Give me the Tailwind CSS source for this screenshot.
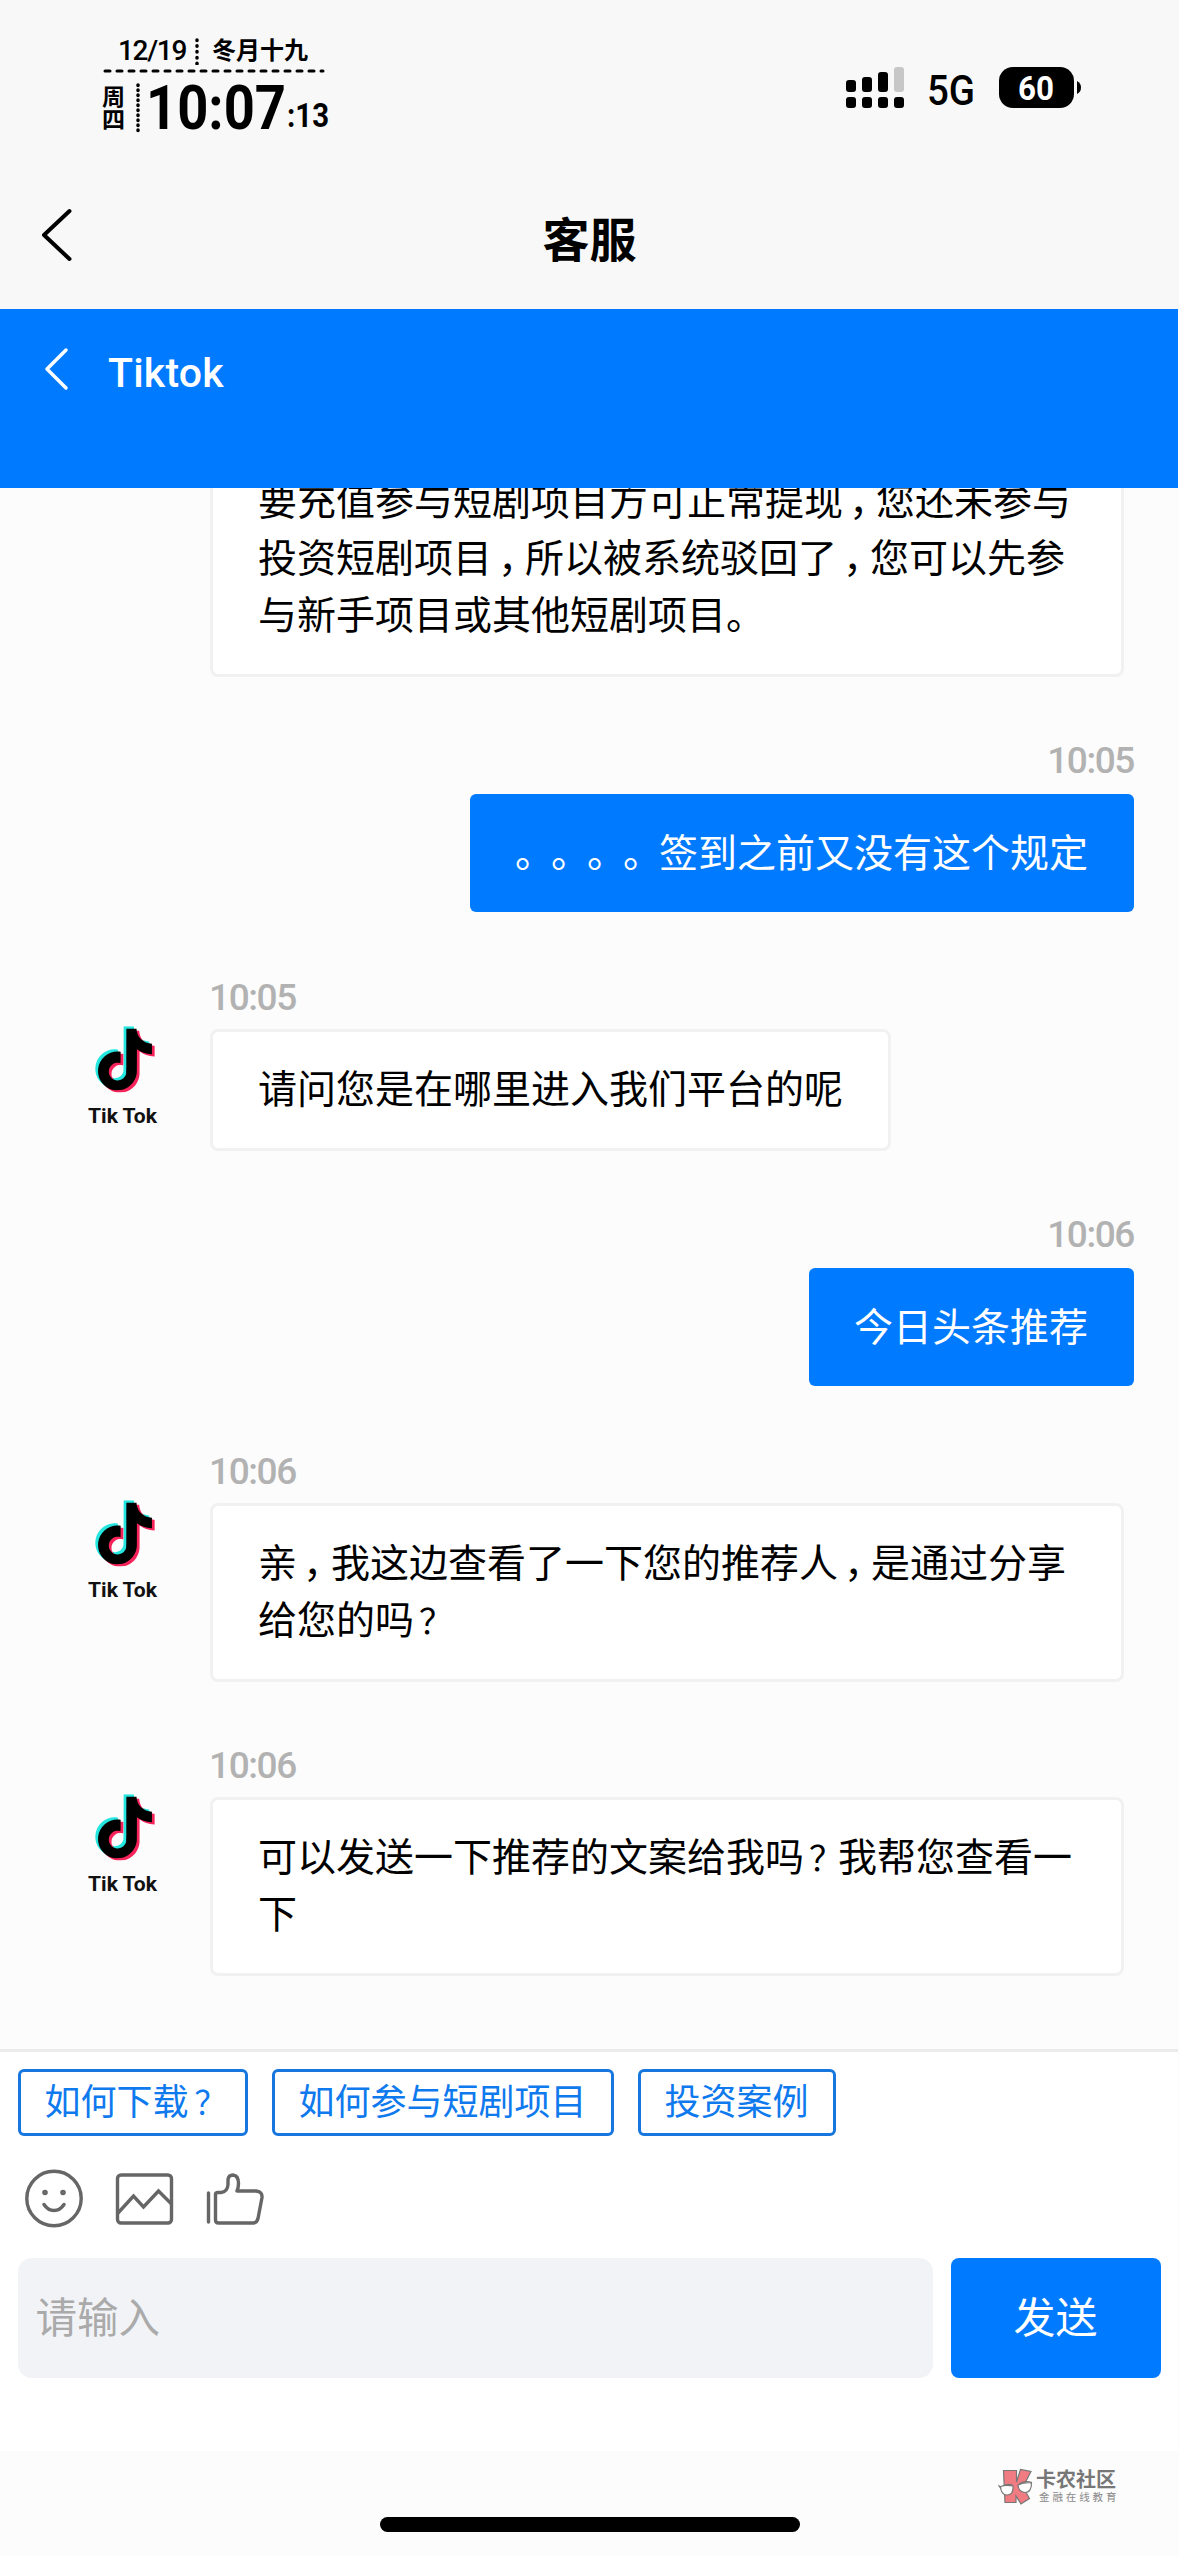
<!DOCTYPE html>
<html lang="zh-CN">
<head>
<meta charset="utf-8">
<title>客服</title>
<script src="https://cdn.jsdelivr.net/npm/@tailwindcss/browser@4"></script>
</head>
<body class="w-[1179px] h-[2556px] overflow-hidden flex flex-col bg-[#fcfcfc] text-black font-[Roboto,'Noto_Sans_CJK_SC',sans-serif]">
<svg class="hidden">
  <symbol id="note" viewBox="0 0 24 24"><path d="M12.525.02c1.31-.02 2.61-.01 3.91-.02.08 1.53.63 3.09 1.75 4.17 1.12 1.11 2.7 1.62 4.24 1.79v4.03c-1.44-.05-2.89-.35-4.2-.97-.57-.26-1.1-.59-1.62-.93-.01 2.92.01 5.84-.02 8.75-.08 1.4-.54 2.79-1.35 3.94-1.31 1.92-3.58 3.17-5.91 3.21-1.43.08-2.86-.31-4.08-1.03-2.02-1.19-3.44-3.37-3.65-5.71-.02-.5-.03-1-.01-1.49.18-1.9 1.12-3.72 2.58-4.96 1.66-1.44 3.98-2.13 6.15-1.72.02 1.48-.04 2.96-.04 4.44-.99-.32-2.15-.23-3.02.37-.63.41-1.11 1.04-1.36 1.75-.21.51-.15 1.07-.14 1.61.24 1.64 1.82 3.02 3.5 2.87 1.12-.01 2.19-.66 2.77-1.61.19-.33.4-.67.41-1.06.1-1.79.06-3.57.07-5.36.01-4.03-.01-8.05.02-12.07z"/></symbol>
  <symbol id="avatar" viewBox="0 0 80 104">
    <use href="#note" x="7.300" y="1.200" width="62" height="62" fill="#25e5df"/>
    <use href="#note" x="12.700" y="5.600" width="62" height="62" fill="#f5235a"/>
    <use href="#note" x="10" y="3.400" width="62" height="62" fill="#000"/>
    <text x="4" y="98" font-family="Roboto, sans-serif" font-weight="700" font-size="20" textLength="69" lengthAdjust="spacingAndGlyphs" fill="#111">Tik Tok</text>
  </symbol>
</svg>

<header class="h-[309px] shrink-0 bg-[#f8f8f8]">
  <div class="h-[160px] flex justify-between pl-[102px] pr-[97px]">
    <div class="w-[230px] pt-[35px] flex flex-col">
      <div class="h-[32px] flex items-center pl-[16px]">
        <span class="text-[28px] leading-[32px] font-medium w-[77px] shrink-0 tracking-[-1.300px]">12/19</span>
        <svg class="w-[4px] h-[28px] shrink-0" viewBox="0 0 4 28"><path d="M2 3V27" stroke="#000" stroke-width="3.500" stroke-linecap="round" stroke-dasharray="0.5 5.3"/></svg>
        <span class="text-[24px] leading-[32px] font-bold ml-[13px] whitespace-nowrap">冬月十九</span>
      </div>
      <svg class="w-[226px] h-[6px] mt-[1px]" viewBox="0 0 226 6"><path d="M3 3H221" stroke="#000" stroke-width="3" stroke-linecap="round" stroke-dasharray="5 7"/></svg>
      <div class="flex items-end h-[61px]">
        <div class="w-[23px] shrink-0 text-[23px] leading-[23px] font-bold flex flex-col pb-[3px]"><span>周</span><span>四</span></div>
        <svg class="w-[4px] h-[52px] ml-[11px] mb-[1px] shrink-0" viewBox="0 0 4 52"><path d="M2 3V50" stroke="#000" stroke-width="3.500" stroke-linecap="round" stroke-dasharray="0.5 4.500"/></svg>
        <svg class="w-[188px] h-[60px] ml-[4px] shrink-0" viewBox="0 0 188 60"><text x="2" y="54" font-size="61" font-weight="700" textLength="140" lengthAdjust="spacingAndGlyphs">10:07</text><text x="143" y="52" font-size="33" font-weight="700" textLength="42" lengthAdjust="spacingAndGlyphs">:13</text></svg>
      </div>
    </div>
    <div class="flex items-start gap-[3px] pt-[64px]">
      <svg class="w-[60px] h-[48px]" viewBox="0 0 60 48">
        <rect x="0" y="16" width="10" height="12" rx="3"/><rect x="16" y="13" width="10" height="15" rx="3"/><rect x="32" y="8" width="10" height="20" rx="3"/><rect x="48" y="3" width="10" height="25" rx="3" fill="#c7c7c7"/>
        <rect x="0" y="33" width="10" height="11" rx="3"/><rect x="16" y="33" width="10" height="11" rx="3"/><rect x="32" y="33" width="10" height="11" rx="3"/><rect x="48" y="33" width="10" height="11" rx="3"/>
      </svg>
      <svg class="w-[84px] h-[48px]" viewBox="0 0 84 48"><text x="18" y="40.500" font-size="43" font-weight="500" textLength="48" lengthAdjust="spacingAndGlyphs">5G</text></svg>
      <svg class="w-[86px] h-[48px]" viewBox="0 0 86 48"><rect x="3" y="3" width="75" height="41" rx="14"/><path d="M81 17q4 2 4 6.500t-4 6.500z"/><text x="22" y="35.500" fill="#fff" font-size="33" font-weight="700" textLength="36" lengthAdjust="spacingAndGlyphs">60</text></svg>
    </div>
  </div>
  <div class="h-[149px] grid grid-cols-3 items-center">
    <svg class="w-[40px] h-[60px] ml-[38px]" viewBox="0 0 40 60"><path d="M31.500 6L6 30L31.500 54" fill="none" stroke="#000" stroke-width="4" stroke-linecap="round" stroke-linejoin="round"/></svg>
    <h1 class="text-[47px] leading-[60px] font-bold text-center pt-[13px]">客服</h1>
  </div>
</header>

<nav class="w-[1178px] h-[179px] shrink-0 bg-[#007aff] flex items-start pt-[34px] pl-[41px] text-white">
  <svg class="w-[30px] h-[52px]" viewBox="0 0 30 52"><path d="M25 7L6 26L25 45" fill="none" stroke="#fff" stroke-width="3.500" stroke-linecap="round" stroke-linejoin="round"/></svg>
  <span class="text-[41px] leading-[52px] font-medium ml-[37px] mt-[4px] tracking-[0.200px]">Tiktok</span>
</nav>

<main class="h-[1561px] shrink-0 overflow-hidden flex flex-col justify-end gap-[63px] pb-[73px] pl-[84px] pr-[45px] text-[39px] leading-[57px]">
  <div class="flex">
    <div class="ml-[126px] w-[914px] border-[3px] border-[#f1f1f1] rounded-lg bg-white px-[45px] pt-[31px] pb-[29px] whitespace-nowrap">
      <p>要充值参与短剧项目方可正常提现<span class="inline-block w-[33px] pl-[6px]">，</span>您还未参与</p>
      <p>投资短剧项目<span class="inline-block w-[33px] pl-[6px]">，</span>所以被系统驳回了<span class="inline-block w-[33px] pl-[6px]">，</span>您可以先参</p>
      <p>与新手项目或其他短剧项目。</p>
    </div>
  </div>

  <div class="flex flex-col items-end">
    <time class="h-[40px] leading-[42px] mb-[14px] text-[37px] font-medium text-[#b2b2b2] tracking-[-1.400px]">10:05</time>
    <div class="h-[118px] mb-[2px] rounded-md bg-[#007aff] text-white pl-[45px] pr-[46px] pt-[2px] flex items-center"><p class="flex whitespace-nowrap"><span class="w-[36px]">。</span><span class="w-[36px]">。</span><span class="w-[36px]">。</span><span class="w-[36px]">。</span>签到之前又没有这个规定</p></div>
  </div>

  <div class="flex">
    <svg class="w-[80px] h-[104px] mt-[48px]"><use href="#avatar"/></svg>
    <div class="ml-[46px]">
      <time class="block h-[40px] leading-[42px] mb-[12px] -ml-[1px] text-[37px] font-medium text-[#b2b2b2] tracking-[-1.400px]">10:05</time>
      <div class="border-[3px] border-[#f1f1f1] rounded-lg bg-white px-[45px] py-[29.500px]"><p>请问您是在哪里进入我们平台的呢</p></div>
    </div>
  </div>

  <div class="flex flex-col items-end">
    <time class="h-[40px] leading-[42px] mb-[14px] text-[37px] font-medium text-[#b2b2b2] tracking-[-1.400px]">10:06</time>
    <div class="h-[118px] mb-[2px] rounded-md bg-[#007aff] text-white pl-[45px] pr-[46px] pt-[2px] flex items-center"><p>今日头条推荐</p></div>
  </div>

  <div class="flex">
    <svg class="w-[80px] h-[104px] mt-[48px]"><use href="#avatar"/></svg>
    <div class="ml-[46px]">
      <time class="block h-[40px] leading-[42px] mb-[12px] -ml-[1px] text-[37px] font-medium text-[#b2b2b2] tracking-[-1.400px]">10:06</time>
      <div class="w-[914px] border-[3px] border-[#f1f1f1] rounded-lg bg-white px-[45px] py-[29.500px] whitespace-nowrap">
        <p>亲<span class="inline-block w-[34px] pl-[6px]">，</span>我这边查看了一下您的推荐人<span class="inline-block w-[33px] pl-[6px]">，</span>是通过分享</p>
        <p class="flex h-[57px]">给您的吗<span class="w-[34px] pl-[5px] pt-[1px] text-[34px]">？</span></p>
      </div>
    </div>
  </div>

  <div class="flex">
    <svg class="w-[80px] h-[104px] mt-[48px]"><use href="#avatar"/></svg>
    <div class="ml-[46px]">
      <time class="block h-[40px] leading-[42px] mb-[12px] -ml-[1px] text-[37px] font-medium text-[#b2b2b2] tracking-[-1.400px]">10:06</time>
      <div class="w-[914px] border-[3px] border-[#f1f1f1] rounded-lg bg-white px-[45px] py-[29.500px] whitespace-nowrap">
        <p class="flex h-[57px]">可以发送一下推荐的文案给我吗<span class="w-[34px] pl-[5px] pt-[1px] text-[34px]">？</span>我帮您查看一</p>
        <p>下</p>
      </div>
    </div>
  </div>
</main>

<section class="w-[1178px] h-[402px] shrink-0 bg-white border-t-[3px] border-[#ebebeb] px-[17.500px] pt-[17px]">
  <div class="flex gap-[24px] text-[36px] leading-[62px] text-[#0f79ee] whitespace-nowrap">
    <span class="h-[67px] w-[230px] border-[3px] border-[#1877de] rounded-md pl-[24px] flex">如何下载<span class="pl-[6px] text-[32px]">？</span></span>
    <span class="h-[67px] w-[342px] border-[3px] border-[#1877de] rounded-md pl-[24px]">如何参与短剧项目</span>
    <span class="h-[67px] w-[198px] border-[3px] border-[#1877de] rounded-md pl-[24px]">投资案例</span>
  </div>
  <div class="flex gap-[30px] mt-[31px] pl-[6px]">
    <svg class="w-[60px] h-[62px]" viewBox="0 0 60 62" fill="none" stroke="#666" stroke-width="3.400" stroke-linecap="round"><circle cx="30" cy="31.500" r="27.200"/><path d="M20 37.500Q24 43.500 30 43.500T40 37.500" stroke-width="3.500"/><circle cx="21" cy="25.500" r="1.300" stroke-width="3"/><circle cx="39" cy="25.500" r="1.300" stroke-width="3"/></svg>
    <svg class="w-[60px] h-[62px]" viewBox="0 0 60 62" fill="none" stroke="#666" stroke-width="3.400"><rect x="3.500" y="8" width="54" height="48" rx="3.500"/><path d="M4 46L19.500 29L29.500 40L44.500 24L57 36.500"/></svg>
    <svg class="w-[60px] h-[62px]" viewBox="0 0 60 62" fill="none" stroke="#666" stroke-width="3.400" stroke-linejoin="round" stroke-linecap="round"><path d="M4.500 26V55M11.500 27.500Q11.500 25.500 14 25.500H17Q23.500 25 24 17.500V12.500Q24.500 8 29 8Q34.500 8.500 34.500 16.500Q34.500 20.500 33 24H52Q58.500 24.500 58 30.500L54 51.500Q53 55.500 49.500 56H14.500Q11.500 56 11.500 53Z"/></svg>
  </div>
  <div class="flex gap-[18px] mt-[29px] h-[120px]">
    <div class="w-[915px] rounded-[14px] bg-[#f2f3f7] text-[#aaa] text-[41.500px] leading-[122px] pl-[18px]">请输入</div>
    <div class="w-[210px] rounded-lg bg-[#007aff] text-white text-[42px] leading-[122px] text-center">发送</div>
  </div>
</section>

<footer class="flex-1 flex flex-col pt-[16px] items-center">
  <div class="self-end mr-[61px] flex">
    <svg class="w-[38px] h-[38px]" viewBox="0 0 38 38" stroke="#777" stroke-width="1.200"><path d="M5.500 3.500H18.500V15L22.500 2.500L33 4.500L25 20L31.500 31.500L23 37L18 29V35.500H7z" fill="#f07c82"/><path d="M0.500 18L2.500 21Q9 15.500 15 18.500M20 18Q26 13 34 15.500" fill="none"/><path d="M2.500 19.500Q8 17.500 15 19Q15.500 28 9 28Q3 28 2.500 19.500zM20 18Q27 15 33.500 16Q33.500 25.500 27 25.500Q20.500 25 20 18z" fill="#fff"/></svg>
    <div class="w-[82px] flex flex-col whitespace-nowrap pt-[3px]">
      <span class="text-[20px] leading-[20px] font-bold text-[#777]">卡农社区</span>
      <span class="text-[10.500px] leading-[13px] mt-[1px] pl-[3px] tracking-[2.900px] text-[#888]">金融在线教育</span>
    </div>
  </div>
  <div class="w-[420px] h-[15px] rounded-full bg-black mt-[12px]"></div>
</footer>
</body>
</html>
